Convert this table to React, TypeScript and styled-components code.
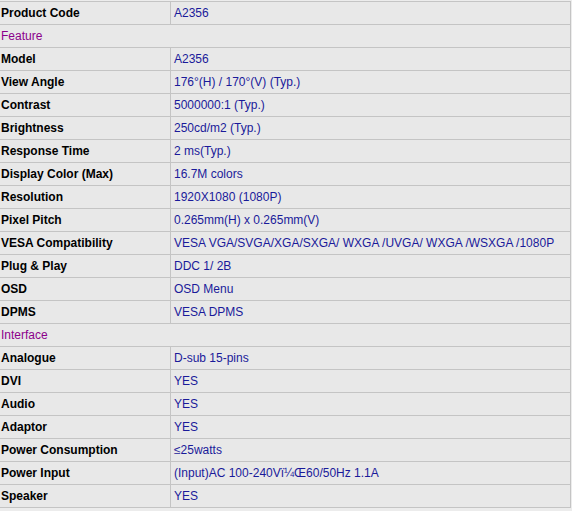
import React from "react";
import styled, { createGlobalStyle } from "styled-components";

const Global = createGlobalStyle`
  html, body { margin: 0; padding: 0; background: #ffffff; }
  body { font-family: Arial, "Liberation Sans", sans-serif; font-size: 12px; }
`;

const Page = styled.div`
  width: 572px;
  height: 511px;
  background: #ececec;
  padding-top: 1px;
  box-sizing: border-box;
`;

const Table = styled.div`
  width: 571px;
  box-sizing: border-box;
  border-right: 1px solid #c4c4c4;
  background: #e8e8e8;
`;

const Row = styled.div`
  display: grid;
  grid-template-columns: 171px 1fr;
  height: 23px;
  box-sizing: border-box;
  border-top: 1px solid #c4c4c4;
  &:last-child { height: 24px; border-bottom: 1px solid #c4c4c4; }
`;

const Label = styled.div`
  font-weight: bold;
  color: #000000;
  padding: 0 0 1px 1px;
  display: flex;
  align-items: center;
  border-right: 1px solid #c4c4c4;
  white-space: nowrap;
`;

const Value = styled.div`
  color: #1a1a9a;
  padding: 0 0 1px 3px;
  display: flex;
  align-items: center;
  white-space: nowrap;
`;

const Section = styled.div`
  height: 23px;
  box-sizing: border-box;
  border-top: 1px solid #c4c4c4;
  color: #8b008b;
  padding: 0 0 1px 1px;
  display: flex;
  align-items: center;
`;

type Item = { label: string; value?: string; section?: boolean };

const rows: Item[] = [
  { label: "Product Code", value: "A2356" },
  { label: "Feature", section: true },
  { label: "Model", value: "A2356" },
  { label: "View Angle", value: "176°(H) / 170°(V) (Typ.)" },
  { label: "Contrast", value: "5000000:1 (Typ.)" },
  { label: "Brightness", value: "250cd/m2 (Typ.)" },
  { label: "Response Time", value: "2 ms(Typ.)" },
  { label: "Display Color (Max)", value: "16.7M colors" },
  { label: "Resolution", value: "1920X1080 (1080P)" },
  { label: "Pixel Pitch", value: "0.265mm(H) x 0.265mm(V)" },
  { label: "VESA Compatibility", value: "VESA VGA/SVGA/XGA/SXGA/ WXGA /UVGA/ WXGA /WSXGA /1080P" },
  { label: "Plug & Play", value: "DDC 1/ 2B" },
  { label: "OSD", value: "OSD Menu" },
  { label: "DPMS", value: "VESA DPMS" },
  { label: "Interface", section: true },
  { label: "Analogue", value: "D-sub 15-pins" },
  { label: "DVI", value: "YES" },
  { label: "Audio", value: "YES" },
  { label: "Adaptor", value: "YES" },
  { label: "Power Consumption", value: "≤25watts" },
  { label: "Power Input", value: "(Input)AC 100-240Vï¼Œ60/50Hz 1.1A" },
  { label: "Speaker", value: "YES" },
];

export default function App() {
  return (
    <>
      <Global />
      <Page>
        <Table>
          {rows.map((r, i) =>
            r.section ? (
              <Section key={i}>{r.label}</Section>
            ) : (
              <Row key={i}>
                <Label>{r.label}</Label>
                <Value>{r.value}</Value>
              </Row>
            )
          )}
        </Table>
      </Page>
    </>
  );
}
